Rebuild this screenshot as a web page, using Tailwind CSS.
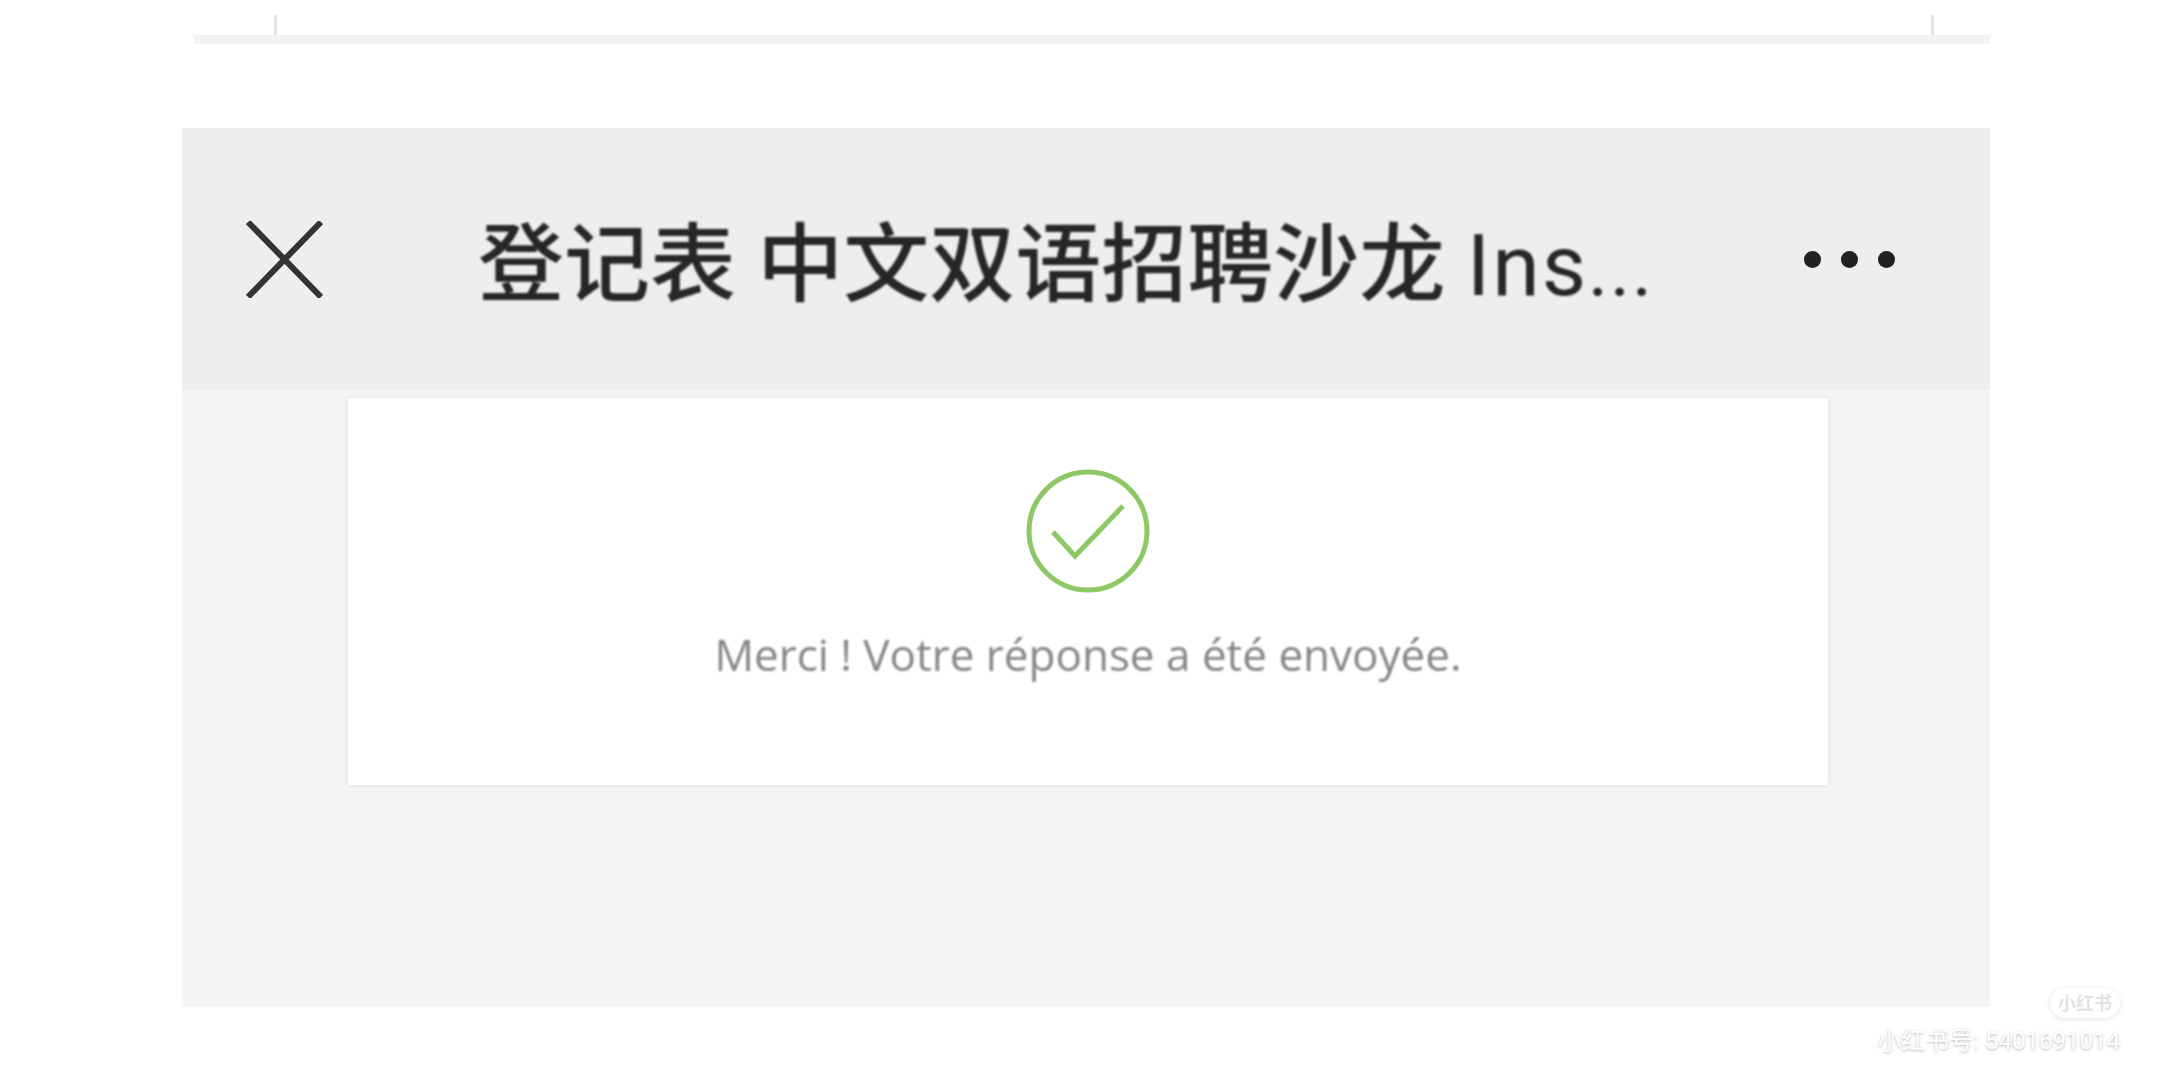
<!DOCTYPE html>
<html lang="zh-CN">
<head>
    <meta charset="UTF-8">
    <meta name="viewport" content="width=device-width, initial-scale=1.0">
    <title>登记表 中文双语招聘沙龙</title>
    <script src="https://cdn.jsdelivr.net/npm/@tailwindcss/browser@4"></script>
</head>
<body class="relative w-[2160px] h-[1080px] overflow-hidden bg-white font-['Roboto','Noto_Sans_CJK_SC',sans-serif]">

    <!-- Bottom edge of the previous block -->
    <div class="ml-[194px] w-[1796px] pt-[15px]">
        <div class="flex justify-between pl-[80px] pr-[56px]">
            <div class="w-[3px] h-[20px] bg-[#e4e4e4]"></div>
            <div class="w-[3px] h-[20px] bg-[#e4e4e4]"></div>
        </div>
        <div class="h-[9px] bg-[#f3f3f3]"></div>
    </div>

    <!-- Phone screenshot -->
    <div class="ml-[182px] mt-[84px] w-[1808px] h-[879px] bg-[#f5f5f5]">
        <header class="flex items-center h-[262px] bg-[#eeeeee] pl-[64px] pr-[95px]">
            <svg class="w-[77px] h-[77px] shrink-0" viewBox="0 0 77 77" fill="none" stroke="#333333" stroke-width="6">
                <path d="M2 1 L75 76 M75 1 L2 76"/>
            </svg>
            <h1 class="ml-[155px] pt-[14px] flex-1 text-[86px] leading-none font-medium whitespace-nowrap text-[#262626] blur-[0.8px]">登记表 中文双语招聘沙龙 <span class="font-normal tracking-[2px]">Ins<span class="text-[76px]">...</span></span></h1>
            <div class="flex gap-[20px] shrink-0">
                <span class="w-[17px] h-[17px] rounded-full bg-[#222222]"></span>
                <span class="w-[17px] h-[17px] rounded-full bg-[#222222]"></span>
                <span class="w-[17px] h-[17px] rounded-full bg-[#222222]"></span>
            </div>
        </header>

        <!-- Confirmation card -->
        <main class="ml-[166px] mt-[8px] w-[1480px] h-[387px] bg-white shadow-[0_0_6px_rgba(0,0,0,0.1)] flex flex-col items-center pt-[71px]">
            <svg class="w-[124px] h-[124px] blur-[0.6px]" viewBox="0 0 124 124" fill="none" stroke="#8cc863">
                <circle cx="62" cy="62" r="59" stroke-width="5"/>
                <path d="M27 63 L49 87 L97 37" stroke-width="5"/>
            </svg>
            <p class="mt-[31px] text-[44px] leading-[60px] whitespace-nowrap text-[#858585] font-['Open_Sans',sans-serif] blur-[1px]">Merci ! Votre réponse a été envoyée.</p>
        </main>
    </div>

    <!-- Watermark -->
    <div class="absolute right-[40px] bottom-[26px] flex flex-col items-end gap-[10px]">
        <div class="w-[70px] h-[30px] rounded-full bg-white shadow-[0_1px_5px_rgba(0,0,0,0.12)] flex items-center justify-center text-[18px] font-bold text-[#e2e2e2] blur-[0.4px]">小红书</div>
        <div class="text-[24px] leading-[26px] whitespace-nowrap text-white [text-shadow:0_1px_3px_rgba(0,0,0,0.3)]">小红书号: 5401691014</div>
    </div>

</body>
</html>
